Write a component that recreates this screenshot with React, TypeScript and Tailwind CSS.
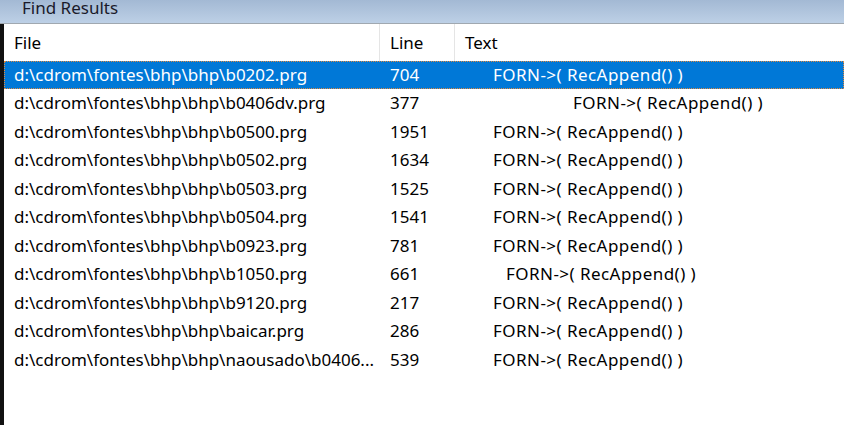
import React from 'react';

type Row = { file: string; line: string; indent: string };

const rows: Row[] = [
  { file: 'd:\\cdrom\\fontes\\bhp\\bhp\\b0202.prg', line: '704', indent: 'pl-[37px]' },
  { file: 'd:\\cdrom\\fontes\\bhp\\bhp\\b0406dv.prg', line: '377', indent: 'pl-[117px]' },
  { file: 'd:\\cdrom\\fontes\\bhp\\bhp\\b0500.prg', line: '1951', indent: 'pl-[37px]' },
  { file: 'd:\\cdrom\\fontes\\bhp\\bhp\\b0502.prg', line: '1634', indent: 'pl-[37px]' },
  { file: 'd:\\cdrom\\fontes\\bhp\\bhp\\b0503.prg', line: '1525', indent: 'pl-[37px]' },
  { file: 'd:\\cdrom\\fontes\\bhp\\bhp\\b0504.prg', line: '1541', indent: 'pl-[37px]' },
  { file: 'd:\\cdrom\\fontes\\bhp\\bhp\\b0923.prg', line: '781', indent: 'pl-[37px]' },
  { file: 'd:\\cdrom\\fontes\\bhp\\bhp\\b1050.prg', line: '661', indent: 'pl-[50px]' },
  { file: 'd:\\cdrom\\fontes\\bhp\\bhp\\b9120.prg', line: '217', indent: 'pl-[37px]' },
  { file: 'd:\\cdrom\\fontes\\bhp\\bhp\\baicar.prg', line: '286', indent: 'pl-[37px]' },
  { file: 'd:\\cdrom\\fontes\\bhp\\bhp\\naousado\\b0406...', line: '539', indent: 'pl-[37px]' },
];

export default function App() {
  return (
    <div className="w-[844px] h-[425px] overflow-hidden bg-white text-black font-['Noto_Sans',sans-serif] text-[17px]">
      {/* title bar */}
      <div className="h-[24px] bg-gradient-to-b from-[#a3b9d4] to-[#bdd0e6] border-b border-[#a0a8b0] flex items-start pl-[22px]">
        <span className="text-[17px] leading-[16px] text-[#1a1a2a]">Find Results</span>
      </div>

      <div className="flex h-[401px]">
        <div className="w-[4px] bg-[#111]" />
        <div className="flex-1 flex flex-col">
          {/* header */}
          <div className="h-[37px] flex items-stretch">
            <div className="w-[376px] border-r border-[#e5e5e5] pl-[10px] flex items-center">File</div>
            <div className="w-[75px] border-r border-[#e5e5e5] pl-[10px] flex items-center">Line</div>
            <div className="flex-1 pl-[10px] flex items-center">Text</div>
          </div>

          {rows.map((r, i) => (
            <div
              key={i}
              className={
                i === 0
                  ? 'h-[28px] flex items-center bg-[#0078d7] text-white border border-dotted border-[#e08a40] leading-[24px]'
                  : 'h-[28.5px] flex items-center border border-transparent leading-[24px]'
              }
            >
              <div className="w-[376px] pl-[9px] whitespace-nowrap">{r.file}</div>
              <div className="w-[75px] pl-[9px]">{r.line}</div>
              <div className={'flex-1 whitespace-nowrap tracking-[0.45px] ' + r.indent}>FORN-&gt;( RecAppend() )</div>
            </div>
          ))}
        </div>
      </div>
    </div>
  );
}
